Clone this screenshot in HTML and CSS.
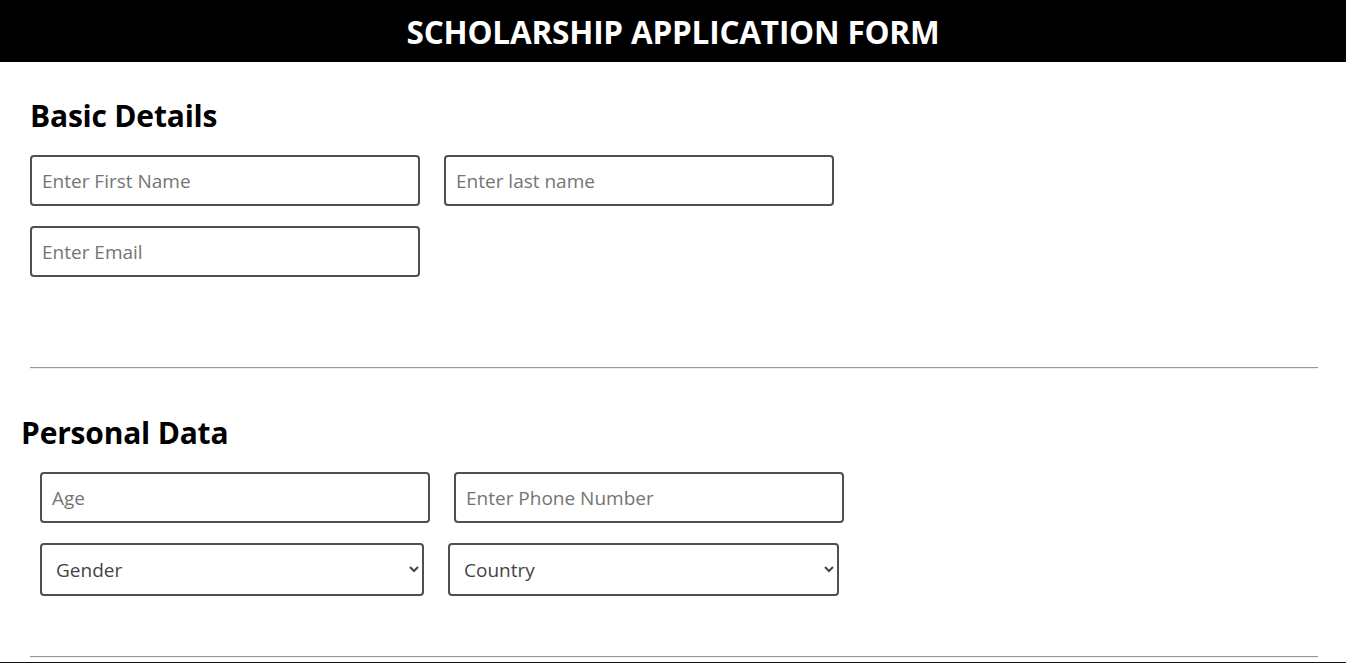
FILE: index.html
```html
<!DOCTYPE html>
<html lang="en">
<head>
<meta charset="utf-8">
<title>Scholarship Application Form</title>
<link rel="stylesheet" href="styles.css">
</head>
<body>
<header class="top-bar">
  <h1 class="title">SCHOLARSHIP APPLICATION FORM</h1>
</header>
<form class="form">
  <section class="basic">
    <h2 class="section-title">Basic Details</h2>
    <div class="row">
      <input class="field" type="text" placeholder="Enter First Name">
      <input class="field" type="text" placeholder="Enter last name">
    </div>
    <div class="row">
      <input class="field" type="email" placeholder="Enter Email">
    </div>
  </section>
  <hr class="divider divider-first">
  <section class="personal">
    <h2 class="section-title personal-title">Personal Data</h2>
    <div class="personal-fields">
      <div class="row">
        <input class="field" type="text" placeholder="Age">
        <input class="field" type="text" placeholder="Enter Phone Number">
      </div>
      <div class="row">
        <select class="choice choice-gender">
          <option>Gender</option>
          <option>Male</option>
          <option>Female</option>
        </select>
        <select class="choice choice-country">
          <option>Country</option>
          <option>India</option>
          <option>USA</option>
        </select>
      </div>
    </div>
  </section>
  <hr class="divider divider-second">
  <div class="next-block"></div>
</form>
</body>
</html>
```

FILE: styles.css
```css
* { box-sizing: border-box; }

html, body {
  margin: 0;
  padding: 0;
  background: #fff;
  font-family: "Open Sans", "Noto Sans", sans-serif;
  color: #000;
}

body { overflow: hidden; }

.top-bar {
  height: 62px;
  background: #000;
  display: flex;
  align-items: center;
  justify-content: center;
}

.title {
  margin: 0;
  color: #fff;
  font-size: 31.5px;
  font-weight: 700;
  letter-spacing: -0.2px;
  line-height: 1;
  padding-top: 2px;
}

.form {
  display: flex;
  flex-direction: column;
}

.basic {
  padding: 34px 0 0 30px;
}

.section-title {
  margin: 0 0 19px 0;
  font-size: 30px;
  line-height: 40px;
  font-weight: 700;
  letter-spacing: -0.2px;
}

.row {
  display: flex;
  gap: 24px;
  margin-bottom: 20px;
}

.row:last-child { margin-bottom: 0; }

.field,
.choice {
  width: 390px;
  height: 51px;
  border: 2px solid #505050;
  border-radius: 4px;
  background: #fff;
  font-family: "Open Sans", "Noto Sans", sans-serif;
  font-size: 19px;
  padding: 1px 10px 0;
  color: #333;
  outline: none;
}

.field::placeholder {
  color: #757575;
}

.choice {
  height: 53px;
  padding: 1px 10px 0;
  color: #444;
}

.choice-gender { width: 384px; }
.choice-country { width: 391px; }

.divider {
  margin: 0 28px 0 30px;
  border: 0;
  border-top: 1px solid #999;
  border-bottom: 1px solid #eee;
  height: 2px;
}

.divider-first { margin-top: 90px; }

.personal {
  padding: 44px 0 0 21px;
}

.personal-title {
  margin-bottom: 19px;
}

.personal-fields {
  padding-left: 19px;
}

.divider-second { margin-top: 60px; }

.next-block {
  margin-top: 4px;
  height: 40px;
  background: #111;
}
```
